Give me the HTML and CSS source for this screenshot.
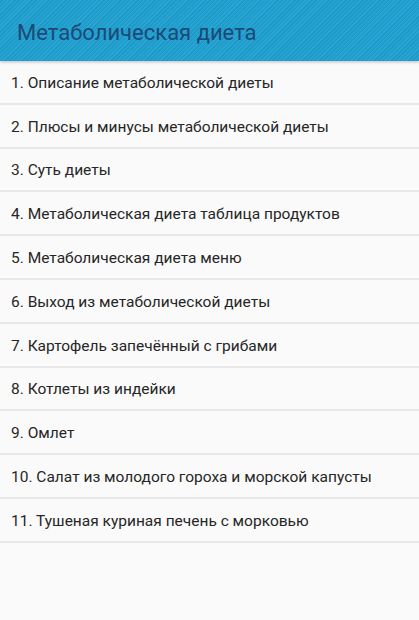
FILE: index.html
```html
<!DOCTYPE html>
<html lang="ru">
<head>
<meta charset="utf-8">
<link rel="stylesheet" href="styles.css">
</head>
<body>
<header class="bar"><h1 class="title">Метаболическая диета</h1></header>
<ul class="list">
<li class="item">1. Описание метаболической диеты</li>
<li class="item">2. Плюсы и минусы метаболической диеты</li>
<li class="item">3. Суть диеты</li>
<li class="item">4. Метаболическая диета таблица продуктов</li>
<li class="item">5. Метаболическая диета меню</li>
<li class="item">6. Выход из метаболической диеты</li>
<li class="item">7. Картофель запечённый с грибами</li>
<li class="item">8. Котлеты из индейки</li>
<li class="item">9. Омлет</li>
<li class="item">10. Салат из молодого гороха и морской капусты</li>
<li class="item">11. Тушеная куриная печень с морковью</li>
</ul>
</body>
</html>
```
FILE: styles.css
```css
html, body { margin: 0; padding: 0; }
body {
  width: 419px;
  height: 620px;
  background: #fafafa;
  font-family: Roboto, "Noto Sans", sans-serif;
  overflow: hidden;
}
.bar {
  height: 61px;
  box-sizing: border-box;
  background-color: #1fa0d0;
  background-image: repeating-linear-gradient(-45deg, rgba(255,255,255,0.06) 0 1px, rgba(0,0,0,0.05) 1px 2px, transparent 2px 3px);
  box-shadow: 0 1px 3px rgba(0,0,0,0.25);
  display: flex;
  align-items: center;
  padding: 3px 0 0 17px;
  position: relative;
  z-index: 1;
}
.title {
  margin: 0;
  font-size: 22px;
  font-weight: 400;
  color: #1c4a77;
}
.list {
  list-style: none;
  margin: 0;
  padding: 0;
}
.item {
  display: flex;
  align-items: center;
  padding: 2px 0 0 11px;
  box-sizing: content-box;
  height: 39.8px;
  border-bottom: 2px solid #e8e8e8;
  font-size: 15.5px;
  color: #262626;
}
```
